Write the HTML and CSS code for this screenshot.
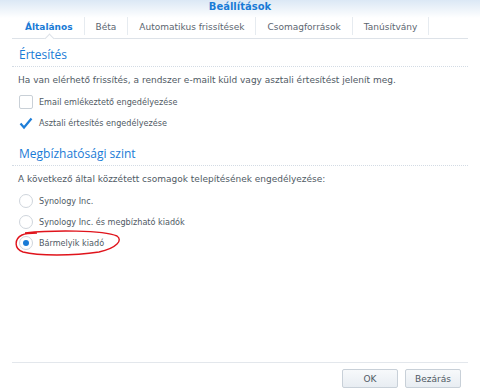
FILE: index.html
```html
<!DOCTYPE html>
<html lang="hu">
<head>
    <meta charset="UTF-8">
    <title>Beállítások</title>
    <link rel="stylesheet" href="styles.css">
</head>
<body>
    <div class="window">
        <div class="header">
            <div class="title">Beállítások</div>
            <div class="tabs">
                <div class="tab active">Általános</div>
                <div class="tab">Béta</div>
                <div class="tab">Automatikus frissítések</div>
                <div class="tab">Csomagforrások</div>
                <div class="tab">Tanúsítvány</div>
            </div>
        </div>

        <div class="content">
            <div class="section">
                <h2>Értesítés</h2>
                <p class="desc">Ha van elérhető frissítés, a rendszer e-mailt küld vagy asztali értesítést jelenít meg.</p>
                <div class="option">
                    <span class="checkbox"></span>
                    <span>Email emlékeztető engedélyezése</span>
                </div>
                <div class="option">
                    <span class="checkbox checked">
                        <svg width="14" height="13" viewBox="0 0 14 13"><path d="M1.5 6.5 L5 10.5 L12.5 1.5" fill="none" stroke="#1e7ed8" stroke-width="2.2"/></svg>
                    </span>
                    <span>Asztali értesítés engedélyezése</span>
                </div>
            </div>

            <div class="section">
                <h2>Megbízhatósági szint</h2>
                <p class="desc">A következő által közzétett csomagok telepítésének engedélyezése:</p>
                <div class="option">
                    <span class="radio"></span>
                    <span>Synology Inc.</span>
                </div>
                <div class="option">
                    <span class="radio"></span>
                    <span>Synology Inc. és megbízható kiadók</span>
                </div>
                <div class="option marked">
                    <span class="radio selected"></span>
                    <span>Bármelyik kiadó</span>
                    <svg class="circle-mark" width="110" height="28" viewBox="0 0 110 28">
                        <path d="M12 4 C40 1 90 1 104 7 C110 11 104 19 86 23 C60 27 25 27 10 23 C1 20 1 10 9 6 C13 4 18 4 24 4" fill="none" stroke="#e0141c" stroke-width="1.4"/>
                    </svg>
                </div>
            </div>
        </div>

        <div class="footer">
            <button class="btn">OK</button>
            <button class="btn">Bezárás</button>
        </div>
    </div>
</body>
</html>
```

FILE: styles.css
```css
body {
    margin: 0;
    font-family: Verdana, "DejaVu Sans", sans-serif;
    font-size: 9px;
    color: #505a64;
    background: #fff;
}
.window {
    width: 480px;
    height: 392px;
    display: flex;
    flex-direction: column;
}
.header {
    background: linear-gradient(to bottom, #dbe8f5 0%, #ffffff 18px);
}
.title {
    text-align: center;
    color: #1a7bd6;
    font-weight: bold;
    font-size: 10px;
    height: 14px;
    line-height: 13px;
}
.tabs {
    display: flex;
    margin: 0 12px;
    padding-left: 2px;
    border-bottom: 1px solid #dde2e8;
    height: 24px;
}
.tab {
    position: relative;
    padding: 2px 11px 0;
    color: #5c6670;
    border-right: 1px solid #e6ebf0;
    margin: 3px 0 2px;
    line-height: 16px;
    height: 16px;
}
.tab.active {
    color: #1a7bd6;
    font-weight: bold;
}
.tab.active::after {
    content: "";
    position: absolute;
    left: 50%;
    bottom: -7px;
    width: 6px;
    height: 6px;
    margin-left: -3px;
    background: #fff;
    border-left: 1px solid #dde2e8;
    border-top: 1px solid #dde2e8;
    transform: rotate(45deg);
}
.content {
    flex: 1;
    padding: 0 12px;
}
.section h2 {
    margin: 0;
    padding: 7px 0 3px 7px;
    font-family: "Open Sans", sans-serif;
    font-weight: normal;
    font-size: 12px;
    color: #1a7bd6;
    border-bottom: 1px dotted #d3dbe4;
}
.section + .section h2 {
    padding-top: 12px;
}
.desc {
    margin: 8px 0 6px 6px;
}
.option {
    position: relative;
    display: flex;
    align-items: center;
    gap: 6px;
    height: 21px;
    padding-left: 7px;
    font-family: "DejaVu Sans Condensed", "DejaVu Sans", sans-serif;
}
.checkbox {
    width: 12px;
    height: 12px;
    border: 1px solid #c9d0d7;
    border-radius: 2px;
    position: relative;
}
.checkbox.checked {
    border-color: transparent;
}
.checkbox svg {
    position: absolute;
    left: -1px;
    top: 0;
}
.radio {
    width: 12px;
    height: 12px;
    border: 1px solid #cfd5dc;
    border-radius: 50%;
    background: #fff;
    position: relative;
}
.radio.selected::after {
    content: "";
    position: absolute;
    left: 3px;
    top: 3px;
    width: 6px;
    height: 6px;
    border-radius: 50%;
    background: #1a7bd6;
}
.circle-mark {
    position: absolute;
    left: 1px;
    top: -3px;
}
.footer {
    margin: 0 12px;
    border-top: 1px solid #e3e7ec;
    padding: 6px 7px 4px 0;
    display: flex;
    justify-content: flex-end;
    gap: 7px;
}
.btn {
    width: 56px;
    height: 19px;
    font-family: Verdana, "DejaVu Sans", sans-serif;
    font-size: 9px;
    color: #505a64;
    background: linear-gradient(to bottom, #f7f9fb, #e8edf2);
    border: 1px solid #c8d0d8;
    border-radius: 2px;
}
```
